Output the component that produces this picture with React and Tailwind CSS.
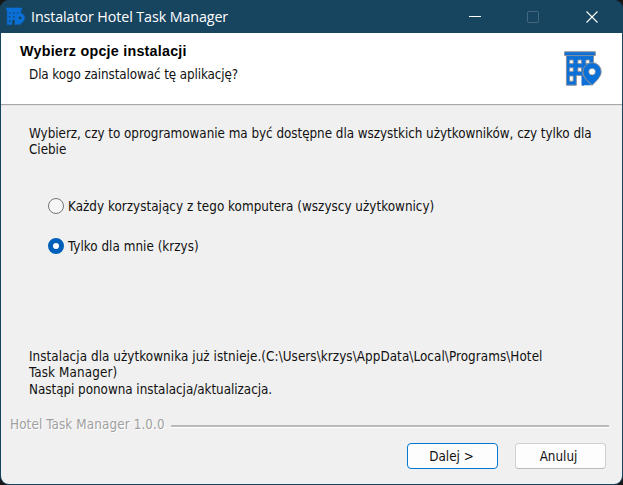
function HotelIcon({ className, outline = '#8a9099', hole = '#ffffff' }) {
  return (
    <svg className={className} viewBox="0 0 38 36" fill="none">
      <path d="M0.5 0.8h30.8v3.7h-1.8v13l-9.5 8v8.7h-2.1v-9.6h-5.6v9.6H2.4V4.5H.5z" fill="#0b70d8" stroke={outline} strokeWidth="1" />
      <path d="M2.2 4.6h27.6" stroke={outline} strokeWidth="1" />
      <path d="M5.6 9h3.6v3.6H5.6zM13.9 9h3.6v3.6h-3.6zM21.9 9h3.6v3.6h-3.6zM5.6 16.8h3.6v3.6H5.6zM13.9 16.8h3.6v3.6h-3.6zM5.6 25h3.6v5.2H5.6z" fill={hole} stroke={outline} strokeWidth=".9" />
      <path d="M13 34.8v-9.6h4.6v9.6z" fill={hole} />
      <path d="M28.1 34.2c-3.5-3.4-9.1-8.4-9.1-13.5a9.1 9.1 0 0 1 18.2 0c0 5.1-5.6 10.1-9.1 13.5z" fill="#0b70d8" stroke={outline} strokeWidth="1" />
      <path d="M17.6 34.2V23.6l2.5 1.6 7.2 9z" fill="#0b70d8" />
      <path d="M18.6 21.8c.6 4.6 5.4 8.9 9.4 12.5" stroke={outline} strokeWidth="1" />
      <circle cx="28.1" cy="20.7" r="3.3" fill={hole} stroke={outline} strokeWidth=".7" />
    </svg>
  );
}

function TitleBar() {
  return (
    <header className="flex h-[33px] shrink-0 items-center bg-[#17445f] pl-1.5 text-white">
      <HotelIcon className="h-[19px] w-[19px]" outline="#0b70d8" hole="#17445f" />
      <h1 className="ml-1.5 whitespace-nowrap font-['Open_Sans',sans-serif] text-[14.3px] leading-5 tracking-[-0.1px]">Instalator Hotel Task Manager</h1>
      <div className="ml-auto flex items-center pr-[25px]">
        <svg className="h-3 w-3" viewBox="0 0 12 12"><path d="M0 5.5h12" stroke="white" /></svg>
        <svg className="ml-[46px] h-3 w-3" viewBox="0 0 12 12"><rect x=".5" y=".5" width="11" height="11" rx="1" fill="none" stroke="#456a7f" /></svg>
        <svg className="ml-[47px] h-3 w-3" viewBox="0 0 12 12"><path d="M.5.5l11 11M11.5.5l-11 11" stroke="white" strokeWidth="1.1" /></svg>
      </div>
    </header>
  );
}

function Radio({ checked, label }) {
  return (
    <label className="flex h-4 items-center">
      <span className={checked ? 'box-border h-4 w-4 rounded-full border-[5px] border-[#005fb8] bg-white' : 'box-border h-4 w-4 rounded-full border border-[#767676] bg-[#f6f6f6]'} />
      <span className="ml-1 mt-px whitespace-nowrap tracking-[0.03px]">{label}</span>
    </label>
  );
}

export default function App() {
  return (
    <div className="h-[485px] w-[623px] overflow-hidden bg-[#171717] font-['DejaVu_Sans_Condensed','DejaVu_Sans',sans-serif] text-[13.33px] leading-4 text-[#111]">
      <div className="flex h-full flex-col overflow-hidden rounded-[9px] bg-[#17445f]">
        <TitleBar />
        <div className="mx-px mb-px flex flex-1 flex-col overflow-hidden rounded-b-lg bg-[#f0f0f0]">
          <section className="flex h-[73px] shrink-0 border-b border-[#e3e3e3] bg-white">
            <div className="flex flex-1 border-b border-[#a8a8a8]">
              <div className="pl-[19px] pt-[10px]">
                <h2 className="whitespace-nowrap font-['Liberation_Sans',Arial,sans-serif] text-[14.3px] font-bold leading-4 tracking-[0.24px] text-black">Wybierz opcje instalacji</h2>
                <p className="ml-[9px] mt-2 whitespace-nowrap tracking-[-0.1px]">Dla kogo zainstalować tę aplikację?</p>
              </div>
              <HotelIcon className="ml-auto mr-5 mt-[18px] h-9 w-[38px]" />
            </div>
          </section>
          <main className="flex h-[311px] shrink-0 flex-col px-7">
            <p className="mt-[20px] whitespace-nowrap tracking-[-0.03px]">Wybierz, czy to oprogramowanie ma być dostępne dla wszystkich użytkowników, czy tylko dla<br />Ciebie</p>
            <div className="ml-[19px] mt-[40px] flex flex-col gap-6">
              <Radio label="Każdy korzystający z tego komputera (wszyscy użytkownicy)" />
              <Radio checked label="Tylko dla mnie (krzys)" />
            </div>
            <div className="mt-[95px] whitespace-nowrap leading-[16.4px]">
              <p className="tracking-[0.07px]">Instalacja dla użytkownika już istnieje.(C:\Users\krzys\AppData\Local\Programs\Hotel</p>
              <p className="tracking-[0.12px]">Task Manager)</p>
              <p className="tracking-[-0.03px]">Nastąpi ponowna instalacja/aktualizacja.</p>
            </div>
          </main>
          <div className="flex h-4 shrink-0 items-center pl-[9px] pr-[13px] text-[#a0a0a0]">
            <span className="w-[161px] whitespace-nowrap tracking-[0.12px] [text-shadow:1px_1px_0_white]">Hotel Task Manager 1.0.0</span>
            <span className="mt-0.5 h-[3px] flex-1 border-b border-white bg-[#bababa]" />
          </div>
          <footer className="mr-4 mt-2.5 flex justify-end gap-[17px]">
            <button className="h-[26px] w-[91px] rounded border border-[#0078d4] bg-[#fdfdfd] pr-0.5 pt-0.5">Dalej &gt;</button>
            <button className="h-[26px] w-[91px] rounded border border-[#d0d0d0] border-b-[#bababa] bg-[#fdfdfd] pr-1 pt-0.5">Anuluj</button>
          </footer>
        </div>
      </div>
    </div>
  );
}
